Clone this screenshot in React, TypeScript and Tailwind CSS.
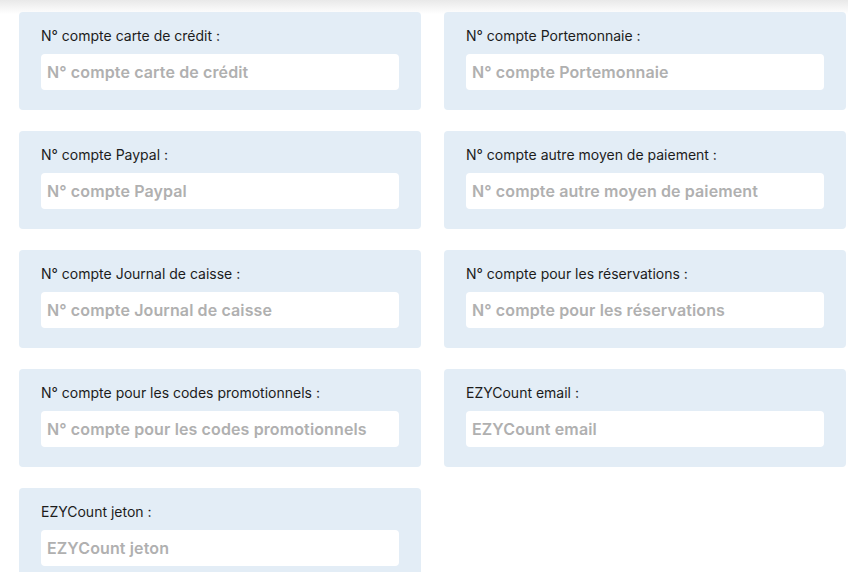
import React from "react";

const fields = [
  "N° compte carte de crédit",
  "N° compte Portemonnaie",
  "N° compte Paypal",
  "N° compte autre moyen de paiement",
  "N° compte Journal de caisse",
  "N° compte pour les réservations",
  "N° compte pour les codes promotionnels",
  "EZYCount email",
  "EZYCount jeton",
];

export default function App() {
  return (
    <div className="relative w-[848px] h-[572px] overflow-hidden bg-white" style={{ fontFamily: "Inter, 'Noto Sans', sans-serif" }}>
      <div className="absolute top-0 left-0 right-0 h-[14px] bg-gradient-to-b from-[#e9e9e9] to-white" />
      <div className="relative grid grid-cols-2 gap-x-[23px] gap-y-[21px] pl-[19px] pr-[2px] pt-[12px]">
        {fields.map((f) => (
          <div key={f} className="bg-[#e3edf6] rounded-[4px] px-[22px] pt-[14px] pb-[20px]">
            <label className="block text-[14px] leading-[20px] text-[#1c1c1c] mb-[8px]">{f} :</label>
            <input
              placeholder={f}
              className="w-full h-[36px] rounded-[4px] bg-white px-[6px] text-[16px] tracking-[0.12px] font-semibold text-[#333] placeholder:text-[#b0b0b0] outline-none"
              style={{ fontFamily: "Inter, 'Noto Sans', sans-serif" }}
            />
          </div>
        ))}
      </div>
    </div>
  );
}
